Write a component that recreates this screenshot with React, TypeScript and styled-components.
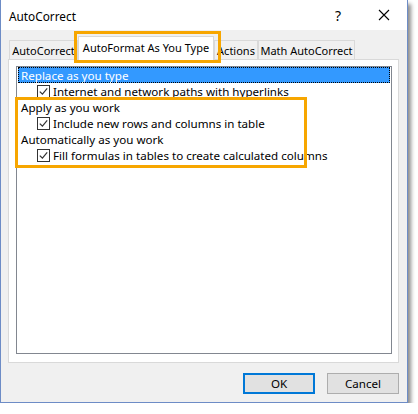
import React from 'react'
import styled, { createGlobalStyle } from 'styled-components'

const GlobalStyle = createGlobalStyle`
    html, body {
        margin: 0;
        padding: 0;
        background: #ffffff;
    }
    body {
        font-family: "Noto Sans", "Liberation Sans", sans-serif;
        font-size: 11.6px;
        color: #000000;
    }
`

const Window = styled.div`
    position: relative;
    width: 406px;
    height: 402px;
    border: 1px solid #6d8cc6;
    border-top: none;
    background: #f0f0f0;
    box-shadow: 3px 4px 4px rgba(0, 0, 0, 0.45);
    display: flex;
    flex-direction: column;
`

const TitleBar = styled.div`
    height: 30px;
    background: #ffffff;
    display: flex;
    align-items: center;
    padding-left: 8px;
`

const Title = styled.div`
    flex: 1;
    font-size: 11.8px;
    padding-top: 1px;
`

const TitleButton = styled.div`
    width: 46px;
    height: 30px;
    display: flex;
    align-items: center;
    justify-content: center;
    font-size: 14px;
`

const Body = styled.div`
    flex: 1;
    display: flex;
    flex-direction: column;
    padding: 6px 8px 8px 7px;
`

const TabStrip = styled.div`
    display: flex;
    align-items: flex-end;
    height: 23px;
    padding-left: 1px;
    position: relative;
    z-index: 1;
`

const Tab = styled.div<{ $active?: boolean; $width: number }>`
    width: ${ p => p.$width }px;
    box-sizing: border-box;
    flex-shrink: 0;
    height: ${ p => p.$active ? 24 : 19 }px;
    padding: ${ p => p.$active ? '0 0 3px 0' : '0' };
    border: 1px solid #d9d9d9;
    border-bottom: none;
    background: ${ p => p.$active ? '#ffffff' : '#f0f0f0' };
    display: flex;
    align-items: center;
    justify-content: center;
    font-size: 11px;
    white-space: nowrap;
    overflow: hidden;
    margin-bottom: ${ p => p.$active ? -1 : 0 }px;
    position: relative;
    z-index: ${ p => p.$active ? 2 : 0 };
`

const Panel = styled.div`
    height: 304px;
    border: 1px solid #d9d9d9;
    background: #ffffff;
    padding: 6px 6px 8px 7px;
    box-sizing: border-box;
    display: flex;
`

const ListBox = styled.div`
    flex: 1;
    border: 1px solid #828790;
    background: #ffffff;
    display: flex;
    flex-direction: column;
    padding: 0 1px;
`

const Row = styled.div<{ $selected?: boolean; $indent?: boolean }>`
    height: 16px;
    display: flex;
    align-items: center;
    padding-left: ${ p => p.$indent ? 19 : 3 }px;
    background: ${ p => p.$selected ? '#3399ff' : 'transparent' };
    color: ${ p => p.$selected ? '#ffffff' : '#000000' };
    outline: ${ p => p.$selected ? '1px dotted #000000' : 'none' };
    outline-offset: -1px;
    white-space: nowrap;
`

const CheckBox = styled.span`
    width: 11px;
    height: 11px;
    border: 1px solid #333333;
    background: #ffffff;
    display: inline-flex;
    align-items: center;
    justify-content: center;
    margin-right: 3px;
    flex-shrink: 0;
`

const Footer = styled.div`
    display: flex;
    justify-content: flex-end;
    gap: 12px;
    margin-top: 10px;
`

const Button = styled.div<{ $default?: boolean }>`
    width: ${ p => p.$default ? 68 : 70 }px;
    height: ${ p => p.$default ? 17 : 19 }px;
    border: ${ p => p.$default ? '2px solid #0078d7' : '1px solid #adadad' };
    background: #e1e1e1;
    display: flex;
    align-items: center;
    justify-content: center;
`

const Highlight = styled.div`
    position: absolute;
    border: 3px solid #f7a600;
    box-sizing: border-box;
    pointer-events: none;
    z-index: 5;
`

const Check = () => (
    <CheckBox>
        <svg width="9" height="9" viewBox="0 0 9 9">
            <path d="M0.8 4.6 L3.4 7.2 L8.2 1.4" fill="none" stroke="#333" strokeWidth="1.2" />
        </svg>
    </CheckBox>
)

const Close = () => (
    <svg width="12" height="12" viewBox="0 0 12 12">
        <path d="M1 1 L11 11 M11 1 L1 11" stroke="#000" strokeWidth="1.1" />
    </svg>
)

const tabs = [
    { label: 'AutoCorrect', width: 69 },
    { label: 'AutoFormat As You Type', width: 136 },
    { label: 'Actions', width: 44 },
    { label: 'Math AutoCorrect', width: 97 },
]

const App: React.FC = () => {
    return (
        <>
            <GlobalStyle />
            <Window>
                <TitleBar>
                    <Title>AutoCorrect</Title>
                    <TitleButton>?</TitleButton>
                    <TitleButton><Close /></TitleButton>
                </TitleBar>
                <Body>
                    <TabStrip>
                        { tabs.map((t, i) => (
                            <Tab key={ t.label } $active={ i === 1 } $width={ t.width }>{ t.label }</Tab>
                        )) }
                    </TabStrip>
                    <Panel>
                        <ListBox>
                            <Row $selected>Replace as you type</Row>
                            <Row $indent><Check />Internet and network paths with hyperlinks</Row>
                            <Row>Apply as you work</Row>
                            <Row $indent><Check />Include new rows and columns in table</Row>
                            <Row>Automatically as you work</Row>
                            <Row $indent><Check />Fill formulas in tables to create calculated columns</Row>
                        </ListBox>
                    </Panel>
                    <Footer>
                        <Button $default>OK</Button>
                        <Button>Cancel</Button>
                    </Footer>
                </Body>
                <Highlight style={ { left: 73, top: 31, width: 147, height: 32 } } />
                <Highlight style={ { left: 14, top: 97, width: 292, height: 71 } } />
            </Window>
        </>
    )
}

export default App
